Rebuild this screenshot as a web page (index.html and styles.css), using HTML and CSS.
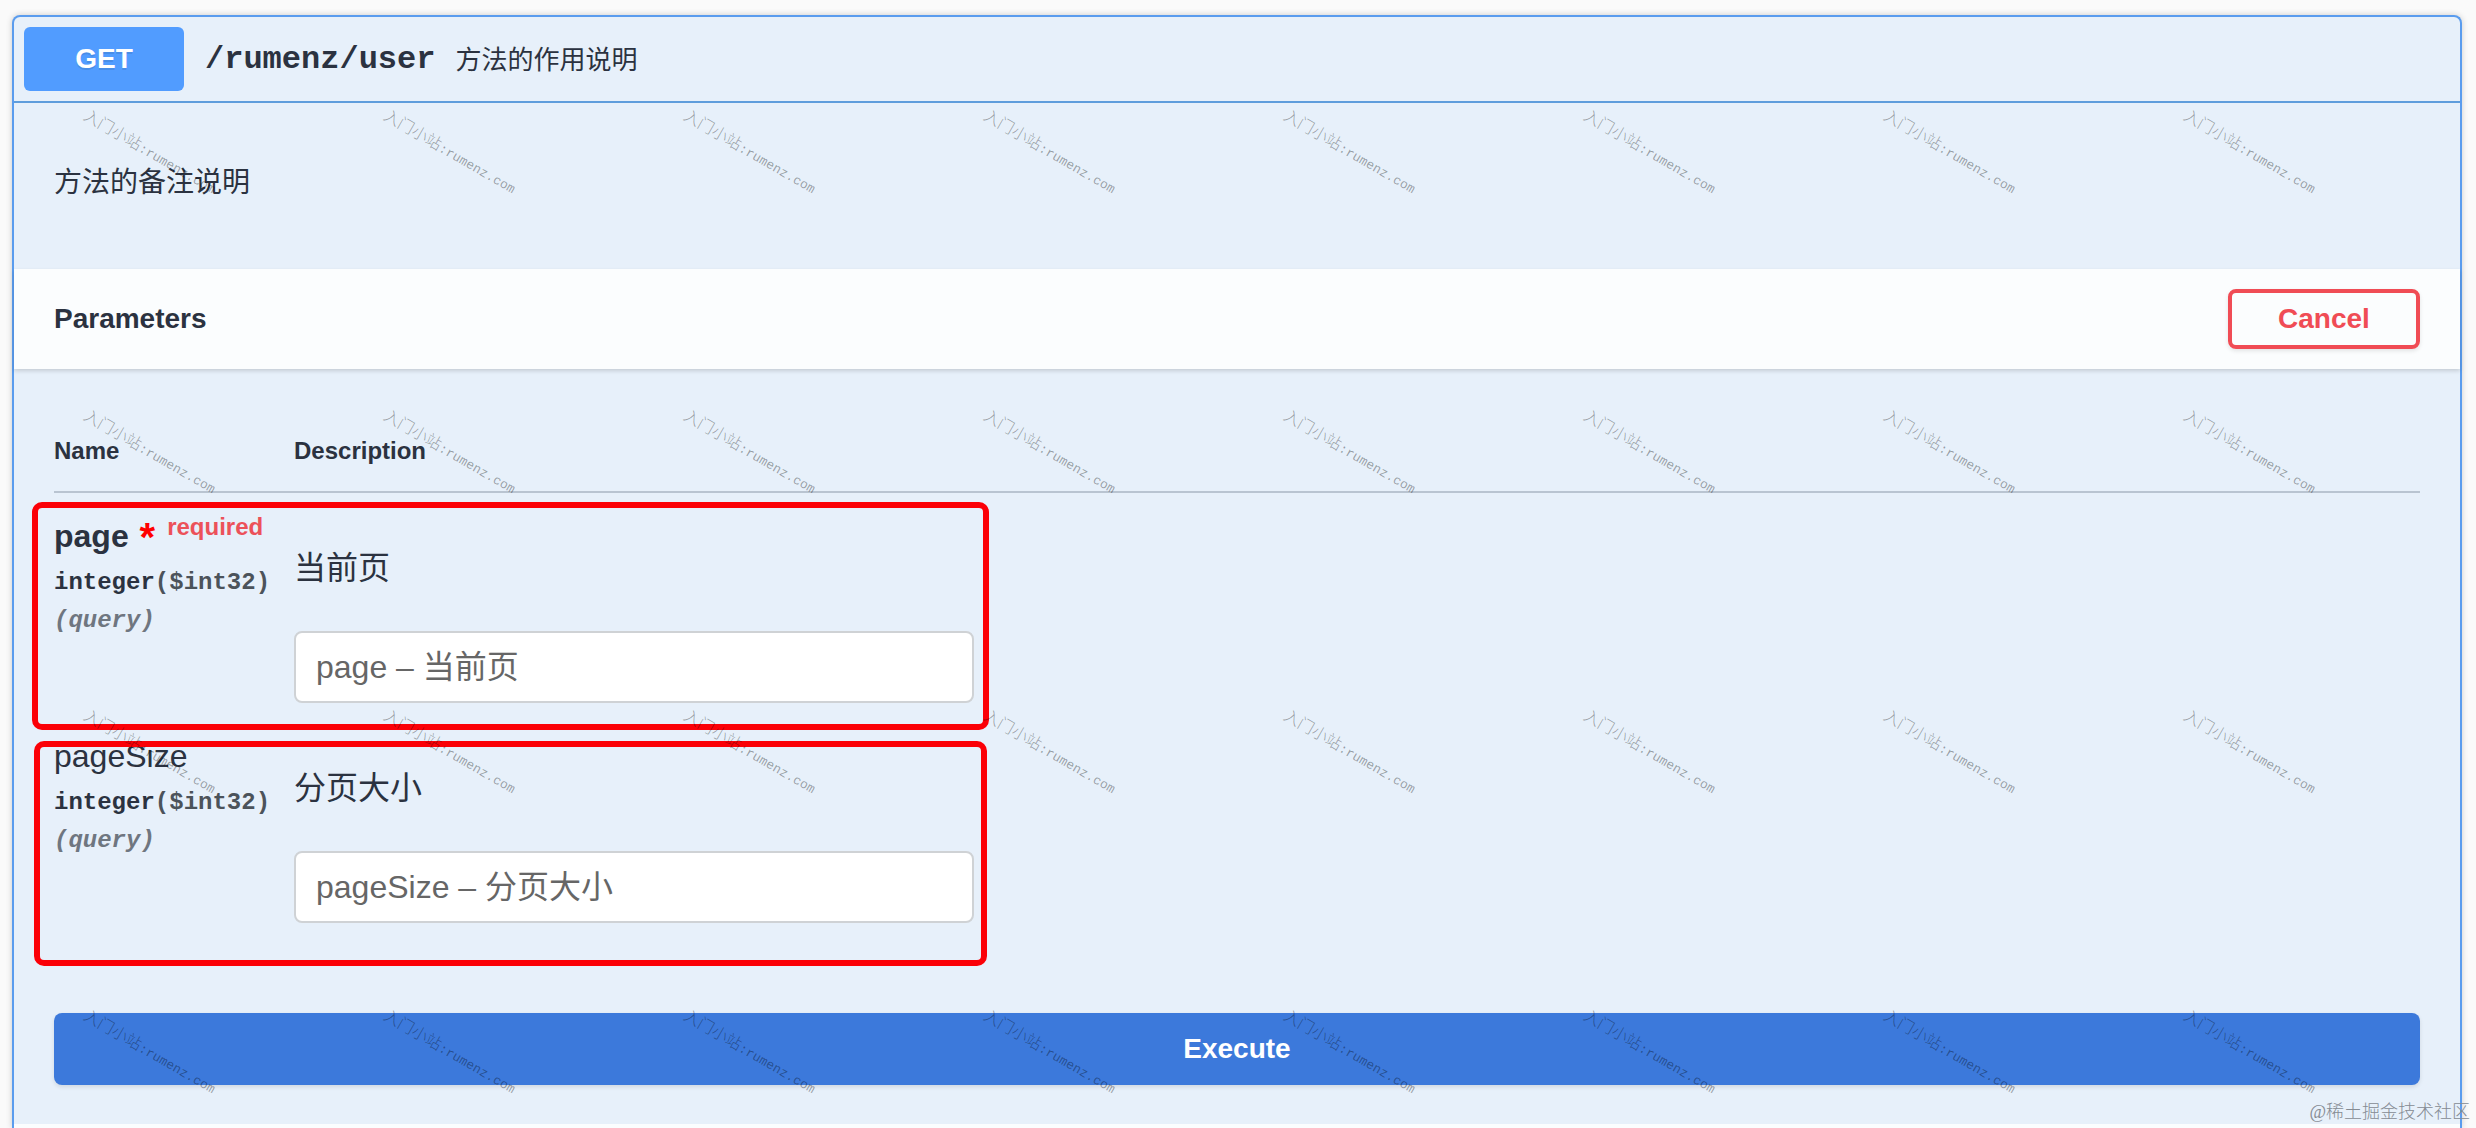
FILE: index.html
```html
<!DOCTYPE html>
<html lang="zh-CN">
<head>
    <meta charset="UTF-8">
    <meta name="viewport" content="width=device-width, initial-scale=1.0">
    <title>Swagger UI</title>
    <link rel="stylesheet" href="styles.css">
</head>
<body>
    <main class="opblock">
        <div class="summary">
            <button type="button" class="method">GET</button>
            <span class="path">/rumenz/user</span>
            <span class="summary-text">方法的作用说明</span>
        </div>
        <p class="notes">方法的备注说明</p>
        <div class="section-header">
            <h4>Parameters</h4>
            <button type="button" class="cancel">Cancel</button>
        </div>
        <form class="params">
            <table>
                <thead>
                    <tr>
                        <th class="col-name">Name</th>
                        <th>Description</th>
                    </tr>
                </thead>
                <tbody>
                    <tr class="param">
                        <td>
                            <label class="name required" for="page">page <span class="star">*</span><span class="flag">required</span></label>
                            <div class="type">integer<span class="format">($int32)</span></div>
                            <div class="in">(query)</div>
                        </td>
                        <td>
                            <p class="desc">当前页</p>
                            <input type="text" id="page" placeholder="page – 当前页">
                            <div class="mark mark-page"></div>
                        </td>
                    </tr>
                    <tr class="param">
                        <td>
                            <label class="name" for="pageSize">pageSize</label>
                            <div class="type">integer<span class="format">($int32)</span></div>
                            <div class="in">(query)</div>
                        </td>
                        <td>
                            <p class="desc">分页大小</p>
                            <input type="text" id="pageSize" placeholder="pageSize – 分页大小">
                            <div class="mark mark-size"></div>
                        </td>
                    </tr>
                </tbody>
            </table>
            <button type="button" class="execute">Execute</button>
        </form>
        <div class="responses"></div>
    </main>
    <div class="watermarks" id="watermarks"></div>
    <div class="source">@稀土掘金技术社区</div>
    <script>
        const layer = document.getElementById("watermarks");
        for (let i = 0; i < 32; i++) {
            const cell = document.createElement("div");
            cell.className = "watermark";
            cell.innerHTML = '<div class="watermark-text">入门小站<span>:rumenz.com</span></div>';
            layer.appendChild(cell);
        }
    </script>
</body>
</html>
```

FILE: styles.css
```css
* {
    box-sizing: border-box;
}
body {
    position: relative;
    display: flex;
    flex-direction: column;
    min-height: 100vh;
    margin: 0;
    padding: 15px 14px 0 12px;
    background: #fafafa;
    color: #2b3240;
    font-family: "Liberation Sans", "Noto Sans CJK SC", sans-serif;
}
h4,
p {
    margin: 0;
}
button,
input {
    font-family: inherit;
}
button {
    cursor: pointer;
}
.opblock {
    display: flex;
    flex: 1;
    flex-direction: column;
    border: 2px solid #5a9cee;
    border-bottom: 0;
    border-radius: 8px 8px 0 0;
    background: #e7f0fa;
    box-shadow: 0 0 6px rgba(0, 0, 0, 0.19);
}
.summary {
    display: flex;
    align-items: center;
    padding: 10px;
    border-bottom: 2px solid #5f9ddc;
}
.method {
    width: 160px;
    height: 64px;
    border: 0;
    border-radius: 6px;
    background: #519cff;
    color: #fff;
    font-size: 28px;
    font-weight: bold;
    text-shadow: 0 2px 0 rgba(0, 0, 0, 0.1);
}
.path {
    padding: 0 20px 0 21px;
    font-family: "Liberation Mono", monospace;
    font-size: 32px;
    font-weight: bold;
}
.summary-text {
    padding-bottom: 3px;
    font-size: 26px;
}
.notes {
    padding: 60px 40px 66px;
    font-size: 28px;
    line-height: 40px;
}
.section-header {
    display: flex;
    align-items: center;
    justify-content: space-between;
    height: 100px;
    padding: 0 40px;
    background: #fbfdfe;
    box-shadow: 0 2px 4px rgba(0, 0, 0, 0.15);
}
.section-header h4 {
    font-size: 28px;
}
.responses {
    flex: 1;
    background: #fbfdfe;
}
.cancel {
    width: 192px;
    height: 60px;
    border: 4px solid #f04c55;
    border-radius: 8px;
    background: transparent;
    box-shadow: 0 2px 4px rgba(0, 0, 0, 0.1);
    color: #f04c55;
    font-size: 28px;
    font-weight: bold;
}
.params {
    padding: 40px 40px 39px;
}
table {
    width: 100%;
    border-spacing: 0;
}
th {
    padding: 25px 0 23px;
    border-bottom: 2px solid #b9c4d1;
    font-size: 24px;
    line-height: 34px;
    text-align: left;
}
.col-name {
    width: 240px;
}
.param {
    position: relative;
}
td {
    padding: 23px 0 10px;
    vertical-align: top;
}
.name {
    display: block;
    height: 40px;
    margin-bottom: 8px;
    font-size: 32px;
    line-height: 40px;
    white-space: nowrap;
}
.required {
    font-weight: bold;
}
.star {
    padding-left: 2px;
    color: #f00;
    font-size: 40px;
    line-height: 0;
    vertical-align: -4px;
}
.flag {
    position: relative;
    top: -12px;
    padding-left: 12px;
    color: #ec5159;
    font-size: 24px;
}
.type,
.in {
    font-family: "Liberation Mono", monospace;
    font-size: 24px;
    font-weight: bold;
    line-height: 38px;
}
.format {
    color: #4c535a;
}
.in {
    color: #6f7680;
    font-style: italic;
}
.desc {
    margin: 32px 0 43px;
    font-size: 32px;
    line-height: 40px;
}
input {
    display: block;
    width: 680px;
    height: 72px;
    padding: 0 20px;
    border: 2px solid #cfd2d5;
    border-radius: 8px;
    background: #fff;
    font-size: 32px;
}
input::placeholder {
    color: #666;
}
/* red frames around each parameter */
.mark {
    position: absolute;
    border: 6px solid #fb0007;
    border-radius: 10px;
    pointer-events: none;
}
.mark-page {
    top: 9px;
    left: -22px;
    width: 957px;
    height: 228px;
}
.mark-size {
    top: 28px;
    left: -20px;
    width: 953px;
    height: 225px;
}
.execute {
    display: block;
    width: 100%;
    height: 72px;
    margin-top: 80px;
    border: 0;
    border-radius: 8px;
    background: #3c79db;
    box-shadow: 0 2px 4px rgba(0, 0, 0, 0.1);
    color: #fff;
    font-size: 28px;
    font-weight: bold;
}
.watermarks {
    position: absolute;
    inset: 0;
    display: grid;
    grid-template-columns: repeat(auto-fill, 300px);
    grid-auto-rows: 300px;
    overflow: hidden;
    pointer-events: none;
}
.watermark {
    padding: 104px 0 0 91px;
}
.watermark-text {
    color: rgba(0, 0, 0, 0.36);
    font-family: "Noto Sans CJK SC", sans-serif;
    font-size: 16px;
    font-weight: 300;
    line-height: 20px;
    white-space: nowrap;
    transform: rotate(30deg);
    transform-origin: 0 0;
}
.watermark-text span {
    font-family: "Liberation Mono", monospace;
    font-size: 13px;
}
.source {
    position: absolute;
    right: 6px;
    bottom: 3px;
    color: #858b93;
    font-family: "Liberation Serif", "Noto Sans CJK SC", serif;
    font-size: 18px;
    font-weight: 300;
    line-height: 26px;
}
```
